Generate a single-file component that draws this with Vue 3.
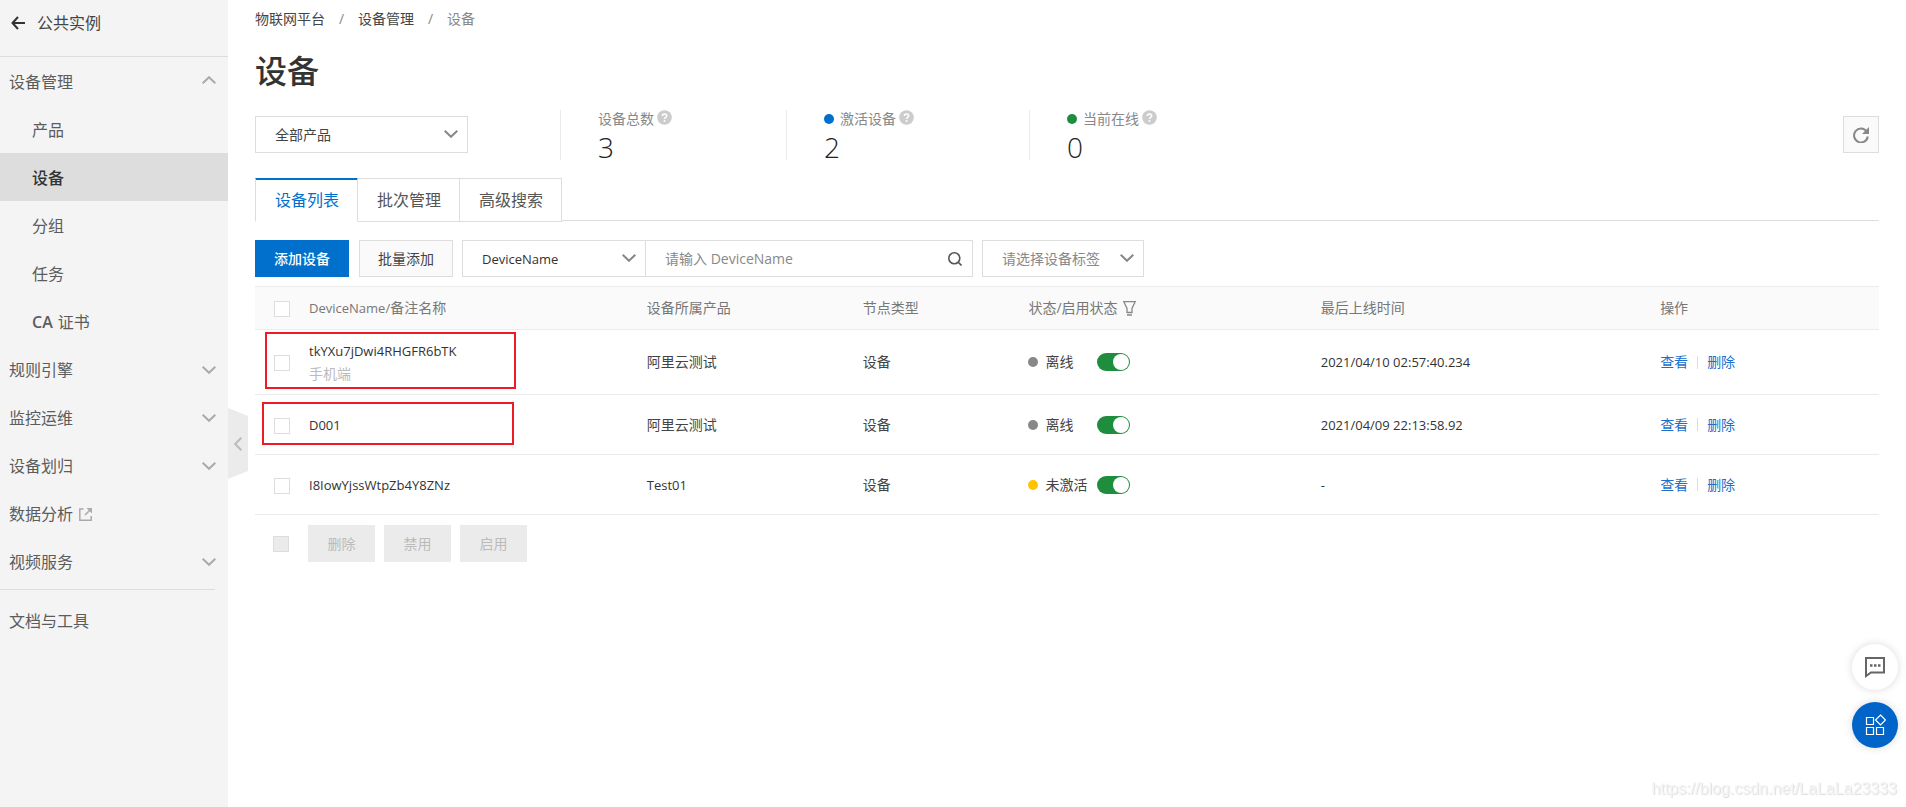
<script setup>
import { ref } from 'vue'

const subItems = [
  { label: '产品' },
  { label: '设备', active: true },
  { label: '分组' },
  { label: '任务' },
  { latin: 'CA', label: '证书' },
]

const groups = [
  { label: '规则引擎', icon: 'chevron' },
  { label: '监控运维', icon: 'chevron' },
  { label: '设备划归', icon: 'chevron' },
  { label: '数据分析', icon: 'external' },
  { label: '视频服务', icon: 'chevron' },
]

const stats = [
  { label: '设备总数', value: 3, dot: '' },
  { label: '激活设备', value: 2, dot: 'blue' },
  { label: '当前在线', value: 0, dot: 'green' },
]

const tabs = ['设备列表', '批次管理', '高级搜索']
const activeTab = ref('设备列表')

const devices = ref([
  { name: 'tkYXu7jDwi4RHGFR6bTK', remark: '手机端', product: '阿里云测试', state: '离线', dot: 'gray', enabled: true, time: '2021/04/10 02:57:40.234', mark: 'mark-tall' },
  { name: 'D001', product: '阿里云测试', state: '离线', dot: 'gray', enabled: true, time: '2021/04/09 22:13:58.92', mark: 'mark-short' },
  { name: 'I8IowYjssWtpZb4Y8ZNz', product: 'Test01', latinProduct: true, state: '未激活', dot: 'yellow', enabled: true, time: '-' },
])
</script>

<template>
  <div class="page">
    <aside class="sidebar">
      <a href="#" class="back">
        <svg width="14" height="14" viewBox="0 0 14 14" fill="none" stroke="#333" stroke-width="2"><path d="M7 1 1.500 7 7 13M1.500 7H14" /></svg>
        <span>公共实例</span>
      </a>
      <nav>
        <button type="button" class="nav-row open">
          <span>设备管理</span>
          <svg class="chev" width="14" height="8" viewBox="0 0 14 8" fill="none" stroke="#aaa" stroke-width="2"><path d="M.7 7.300 7 1.200 13.300 7.300" /></svg>
        </button>
        <a v-for="s in subItems" :key="s.label" href="#" class="sub-row" :class="{ active: s.active }">
          <span v-if="s.latin" class="ca">{{ s.latin }}</span>{{ s.label }}
        </a>
        <button v-for="g in groups" :key="g.label" type="button" class="nav-row">
          <span>{{ g.label }}</span>
          <svg v-if="g.icon === 'chevron'" class="chev" width="14" height="8" viewBox="0 0 14 8" fill="none" stroke="#aaa" stroke-width="2"><path d="M.7.700 7 6.800 13.300.700" /></svg>
          <svg v-else class="ext" width="13" height="13" viewBox="0 0 13 13" fill="none" stroke="#aaa" stroke-width="1.500"><path d="M4.500 1H.8V12.200H12.200V8M6 7 11 2" /><path d="M7.500 0H13V5.500Z" fill="#aaa" stroke="none" /></svg>
        </button>
        <div class="nav-rule"></div>
        <a href="#" class="nav-row">文档与工具</a>
      </nav>
      <button type="button" class="collapse" aria-label="收起">
        <svg width="8" height="14" viewBox="0 0 8 14" fill="none" stroke="#bbb" stroke-width="2"><path d="M7.300.700 1.200 7 7.300 13.300" /></svg>
      </button>
    </aside>

    <main class="main">
      <nav class="crumbs">
        <a href="#">物联网平台</a><i>/</i><a href="#">设备管理</a><i>/</i><span>设备</span>
      </nav>
      <h1>设备</h1>

      <section class="summary">
        <div class="select product">
          <select aria-label="产品"><option>全部产品</option></select>
          <svg width="14" height="8" viewBox="0 0 14 8" fill="none" stroke="#888" stroke-width="2"><path d="M.7.700 7 6.800 13.300.700" /></svg>
        </div>
        <div class="stats">
          <div v-for="s in stats" :key="s.label" class="stat">
            <div class="stat-label">
              <span v-if="s.dot" class="dot" :class="s.dot"></span>
              <span>{{ s.label }}</span>
              <svg class="help" width="15" height="15" viewBox="0 0 15 15"><circle cx="7.500" cy="7.500" r="7.300" fill="#ccc" /><path d="M5.400 6C5.400 3.300 9.700 3.300 9.700 5.800 9.700 7.300 7.500 7.300 7.500 9" fill="none" stroke="#fff" stroke-width="1.600" /><circle cx="7.500" cy="11" r="1" fill="#fff" /></svg>
            </div>
            <div class="stat-value">{{ s.value }}</div>
          </div>
        </div>
        <button type="button" class="refresh" aria-label="刷新">
          <svg width="16" height="16" viewBox="0 0 16 16" fill="none" stroke="#888" stroke-width="2"><path d="M13.600 4.500A6.900 6.900 0 1 0 14.800 9.500" /><path d="M16 0V7H9Z" fill="#888" stroke="none" /></svg>
        </button>
      </section>

      <div class="tabs" role="tablist">
        <button v-for="t in tabs" :key="t" type="button" role="tab" class="tab" :class="{ active: t === activeTab }" :aria-selected="t === activeTab" @click="activeTab = t">{{ t }}</button>
      </div>

      <div class="toolbar">
        <button type="button" class="btn primary">添加设备</button>
        <button type="button" class="btn">批量添加</button>
        <div class="search">
          <div class="select field">
            <select class="latin" aria-label="搜索字段"><option>DeviceName</option></select>
            <svg width="14" height="8" viewBox="0 0 14 8" fill="none" stroke="#888" stroke-width="2"><path d="M.7.700 7 6.800 13.300.700" /></svg>
          </div>
          <div class="query">
            <input type="text" aria-label="DeviceName" placeholder="请输入 DeviceName" />
            <button type="button" aria-label="搜索">
              <svg width="14" height="14" viewBox="0 0 14 14" fill="none" stroke="#555" stroke-width="1.600"><circle cx="6.300" cy="6.300" r="5.500" /><path d="M10.200 10.200 13.500 13.500" /></svg>
            </button>
          </div>
        </div>
        <div class="select tag">
          <select aria-label="设备标签"><option>请选择设备标签</option></select>
          <svg width="14" height="8" viewBox="0 0 14 8" fill="none" stroke="#888" stroke-width="2"><path d="M.7.700 7 6.800 13.300.700" /></svg>
        </div>
      </div>

      <table>
        <colgroup>
          <col class="c-check" /><col class="c-name" /><col class="c-product" /><col class="c-type" /><col class="c-state" /><col class="c-time" /><col />
        </colgroup>
        <thead>
          <tr>
            <th class="pick"><input type="checkbox" class="check" aria-label="全选" /></th>
            <th><span class="latin">DeviceName/</span>备注名称</th>
            <th>设备所属产品</th>
            <th>节点类型</th>
            <th>
              <span class="filter">状态/启用状态
                <svg width="13" height="15" viewBox="0 0 13 15" fill="none" stroke="#888" stroke-width="1.300"><path d="M.8.700H12.200L9 7.500V11.500H4V7.500ZM4 14H9" /></svg>
              </span>
            </th>
            <th>最后上线时间</th>
            <th>操作</th>
          </tr>
        </thead>
        <tbody>
          <tr v-for="d in devices" :key="d.name">
            <td class="pick">
              <input type="checkbox" class="check" :aria-label="d.name" />
              <span v-if="d.mark" class="mark" :class="d.mark"></span>
            </td>
            <td>
              <div class="latin">{{ d.name }}</div>
              <div v-if="d.remark" class="remark">{{ d.remark }}</div>
            </td>
            <td><span :class="{ latin: d.latinProduct }">{{ d.product }}</span></td>
            <td>设备</td>
            <td>
              <div class="state">
                <span class="dot" :class="d.dot"></span>
                <span class="state-text">{{ d.state }}</span>
                <input v-model="d.enabled" type="checkbox" role="switch" class="switch" :aria-label="'启用 ' + d.name" />
              </div>
            </td>
            <td class="latin">{{ d.time }}</td>
            <td><div class="actions"><a href="#">查看</a><i></i><a href="#">删除</a></div></td>
          </tr>
        </tbody>
      </table>

      <div class="batch">
        <input type="checkbox" class="check" disabled aria-label="选择全部" />
        <button type="button" disabled>删除</button>
        <button type="button" disabled>禁用</button>
        <button type="button" disabled>启用</button>
      </div>
    </main>

    <div class="floats">
      <button type="button" class="float" aria-label="反馈">
        <svg width="22" height="22" viewBox="0 0 22 22" fill="none" stroke="#666" stroke-width="2"><path d="M2 2H20V16.500H7L2 20Z" /><path d="M6 9.500H8.500M10 9.500H12.500M14 9.500H16.500" stroke-width="2.500" /></svg>
      </button>
      <button type="button" class="float solid" aria-label="应用">
        <svg width="22" height="22" viewBox="0 0 22 22" fill="none" stroke="#fff" stroke-width="1.200"><path d="M2.500 3.500H9.500V10.500H2.500ZM2.500 13.500H9.500V20.500H2.500ZM12.500 13.500H19.500V20.500H12.500ZM16.500 1 21.500 6 16.500 11 11.500 6Z" /></svg>
      </button>
    </div>
    <div class="watermark">https://blog.csdn.net/LaLaLa23333</div>
  </div>
</template>

<style>
body { background: #fff; }
</style>

<style scoped>
* { box-sizing: border-box; }
.page {
  display: flex;
  min-height: 100vh;
  font: 14px/20px "Open Sans", "Noto Sans CJK SC", sans-serif;
  color: #444;
}
button, input, select { font: inherit; color: inherit; margin: 0; border-radius: 0; }
a { color: inherit; text-decoration: none; }
i { font-style: normal; }
svg { display: block; flex: none; }
.latin { font-size: 13px; }

.sidebar { position: relative; flex: none; width: 228px; background: #f4f4f4; font-size: 16px; color: #5c5c5c; }
.back { display: flex; align-items: center; gap: 12px; height: 57px; padding: 0 0 10px 11px; border-bottom: 1px solid #ddd; color: #444; }
.nav-row { display: flex; align-items: center; width: 100%; height: 48px; padding: 2px 12px 0 9px; border: 0; background: none; text-align: left; }
.chev { margin-left: auto; }
.open .chev { margin-bottom: 4px; }
.ext { margin-left: 6px; }
.sub-row { display: flex; align-items: center; gap: 5px; height: 48px; padding: 2px 0 0 32px; }
.sub-row.active { background: #ddd; color: #333; font-weight: 500; }
.ca { font-weight: 600; }
.nav-rule { height: 1px; margin: 4px 13px 6px 0; background: #ddd; }
.collapse {
  position: absolute; left: 100%; top: 408px; display: flex; align-items: center; justify-content: center;
  width: 20px; height: 71px; padding: 0; border: 0; background: #ebebeb;
  clip-path: polygon(0 0, 100% 8px, 100% 63px, 0 100%);
}

.main { flex: 1; min-width: 0; padding: 9px 27px 0; }
.crumbs { display: flex; }
.crumbs i { width: 33px; text-align: center; color: #888; }
.crumbs span { color: #888; }
h1 { margin: 18px 0 15px; font-size: 32px; line-height: 48px; font-weight: 500; color: #333; }

.summary { display: flex; height: 50px; }
.select { position: relative; height: 37px; border: 1px solid #ddd; background: #fff; }
.select select { appearance: none; width: 100%; height: 100%; padding: 0 30px 0 19px; border: 0; background: none; outline: 0; }
.select svg { position: absolute; right: 9px; top: 13px; pointer-events: none; }
.product { width: 213px; margin: 6px 92px 0 0; }
.stats { display: flex; flex: 1; height: 50px; }
.stat { width: 243px; padding-left: 37px; border-left: 1px solid #ebebeb; }
.stat:first-child { width: 226px; }
.stat-label { display: flex; align-items: center; height: 17px; color: #888; }
.stat-label .dot { margin-right: 6px; }
.help { margin: 0 0 2px 3px; }
.stat-value { font-size: 28px; line-height: 40px; font-weight: 300; color: #222; }
.dot { flex: none; width: 10px; height: 10px; border-radius: 50%; }
.blue { background: #0070cc; }
.green { background: #1e8e3e; }
.gray { background: #888; }
.yellow { background: #ffc400; }
.refresh { display: flex; align-items: center; justify-content: center; width: 36px; height: 37px; margin-top: 6px; padding: 0; border: 1px solid #ddd; background: #fafafa; }

.tabs { display: flex; height: 43px; margin-top: 18px; border-bottom: 1px solid #ddd; font-size: 16px; }
.tab { height: 44px; padding: 0 18px 0 19px; border: 1px solid #ddd; border-left: 0; background: #fff; color: #555; }
.tab.active { border-left: 1px solid #ddd; border-bottom-color: #fff; color: #0070cc; box-shadow: inset 0 1px #0070cc; border-top-color: #0070cc; }

.toolbar { display: flex; margin: 19px 0 9px; }
.btn { width: 94px; height: 37px; margin-right: 9px; padding: 0; border: 1px solid #ddd; background: #fafafa; }
.btn.primary { margin-right: 10px; border-color: #0070cc; background: #0070cc; color: #fff; font-weight: 500; }
.search { display: flex; width: 511px; margin-right: 9px; }
.field { flex: none; width: 184px; color: #333; }
.query { display: flex; flex: 1; height: 37px; border: 1px solid #ddd; border-left: 0; }
.query input { flex: 1; min-width: 0; padding: 0 18px 0 19px; border: 0; outline: 0; background: none; font-size: 14px; }
.query input::placeholder { color: #888; opacity: 1; }
.query button { padding: 0 10px; border: 0; background: none; }
.tag { width: 162px; color: #888; }

table { width: 100%; table-layout: fixed; border-collapse: separate; border-spacing: 0; }
.c-check { width: 36px; }
.c-name { width: 20.8%; }
.c-product { width: 13.3%; }
.c-type { width: 10.2%; }
.c-state { width: 18%; }
.c-time { width: 20.9%; }
th, td { position: relative; padding: 0 0 0 18px; border-bottom: 1px solid #ebebeb; text-align: left; vertical-align: middle; }
th { height: 44px; border-top: 1px solid #ebebeb; background: #fafafa; color: #777; font-weight: 400; }
td { height: 60px; }
td.latin, td .latin { color: #333; }
th.pick, td.pick { padding: 2px 0 0 19px; }
tbody tr:first-child td { height: 65px; }
.filter { display: flex; align-items: center; gap: 5px; }
.check { appearance: none; display: block; width: 16px; height: 16px; border: 1px solid #ddd; background: #fff; }
.check:checked { background: #0070cc; }
.check:disabled { background: #ebebeb; }
.remark { margin-top: 3px; color: #bbb; }
.state { display: flex; align-items: center; }
.state-text { width: 52px; margin-left: 7px; }
.switch { appearance: none; width: 33px; height: 18px; padding: 1px; border-radius: 9px; background: #ccc; }
.switch::before { content: ""; display: block; width: 16px; height: 16px; border-radius: 50%; background: #fff; }
.switch:checked { background: #1e8e3e; }
.switch:checked::before { margin-left: 15px; }
.actions { display: flex; align-items: center; color: #1a70cc; }
.actions i { width: 1px; height: 13px; margin: 0 9px; background: #ddd; }
.mark { position: absolute; z-index: 1; border: 2px solid #ed1c24; pointer-events: none; }
.mark-tall { left: 10px; top: 2px; width: 251px; height: 57px; }
.mark-short { left: 7px; top: 7px; width: 252px; height: 43px; }

.batch { display: flex; align-items: center; gap: 9px; padding: 10px 0 0 18px; }
.batch .check { margin-right: 10px; }
.batch button { width: 67px; height: 37px; padding: 0; border: 0; background: #ebebeb; color: #bbb; }

.floats { position: fixed; right: 8px; bottom: 59px; display: grid; gap: 12px; }
.float { display: flex; align-items: center; justify-content: center; width: 46px; height: 46px; padding: 0; border: 0; border-radius: 50%; background: #fff; box-shadow: 0 0 8px rgba(0, 0, 0, .15); }
.float.solid { background: #0064c8; }
.watermark { position: fixed; right: 9px; bottom: 8px; font: 16px/20px "Liberation Sans", Arial, sans-serif; color: #f4f4f4; text-shadow: 1px 1px 1px #ddd; }
</style>
